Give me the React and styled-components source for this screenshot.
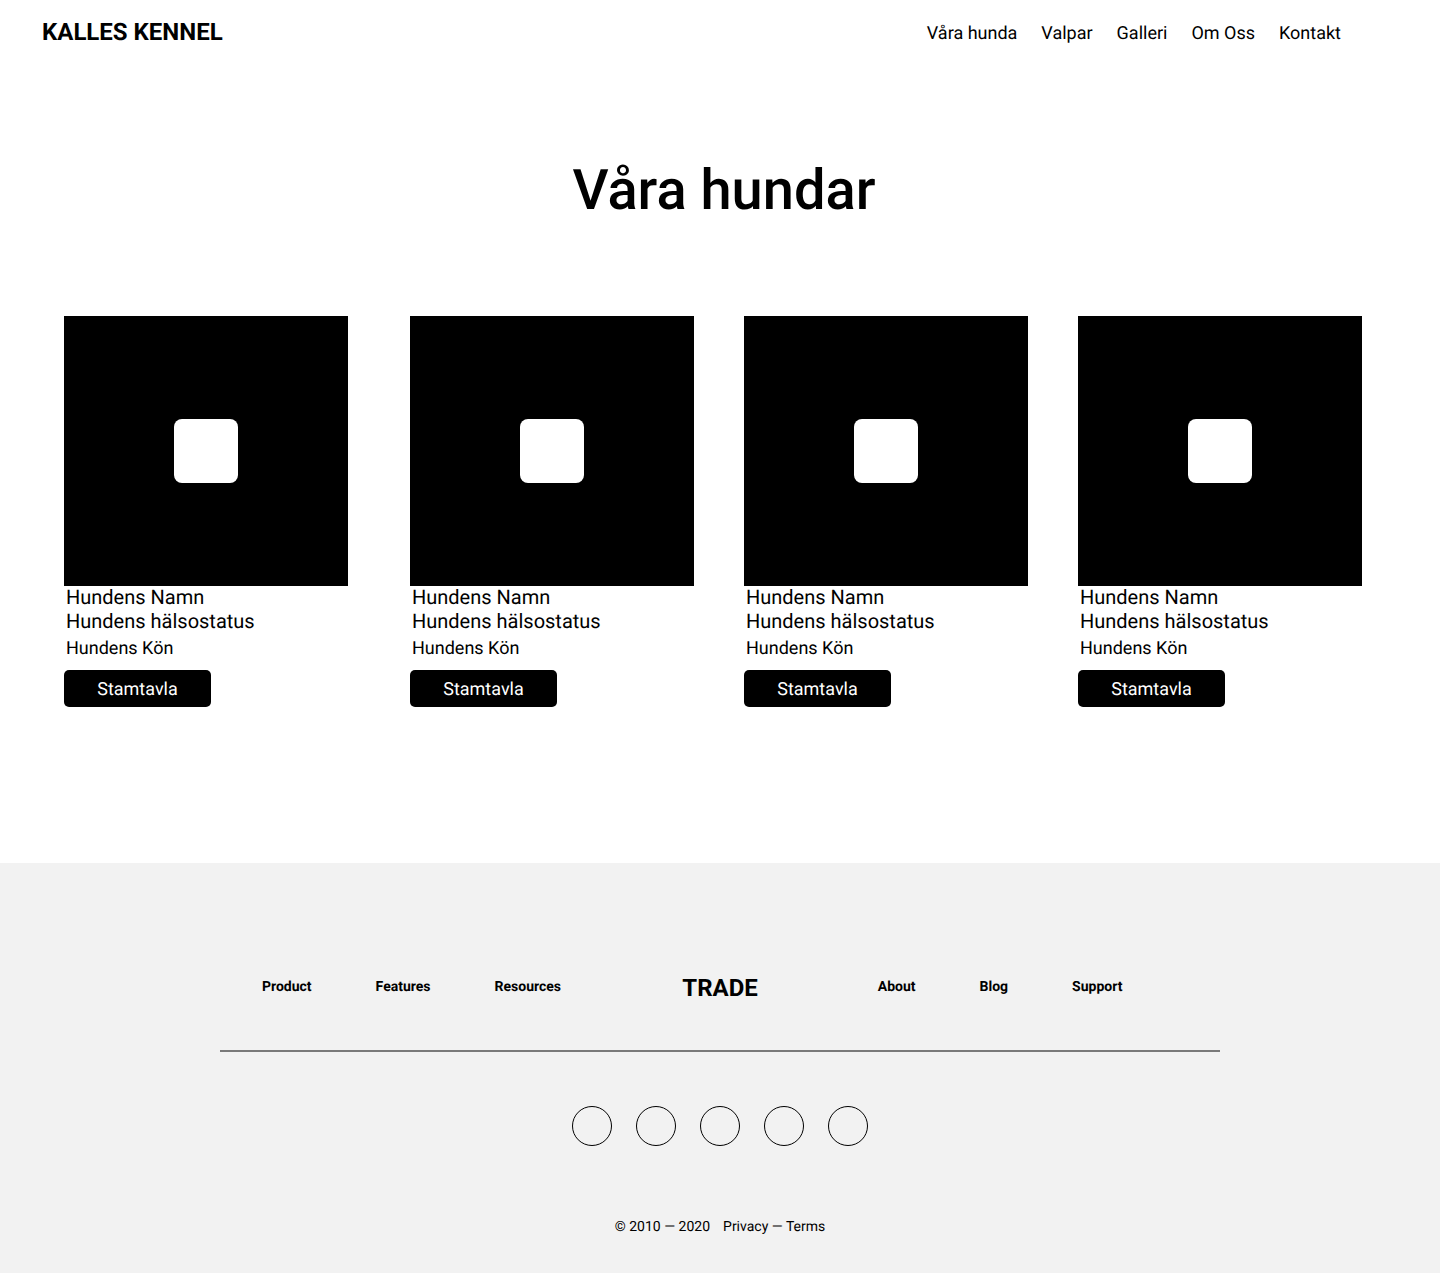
import React from "react";
import styled, { createGlobalStyle } from "styled-components";

const GlobalStyle = createGlobalStyle`
  *, *::before, *::after { box-sizing: border-box; }
  body {
    margin: 0;
    background: #fff;
    color: #000;
    font-family: Roboto, "Liberation Sans", sans-serif;
    text-rendering: geometricPrecision;
  }
  h1, h2, p, ul { margin: 0; padding: 0; }
  ul { list-style: none; }
  a { color: inherit; text-decoration: none; }
`;

const Header = styled.header`
  display: flex;
  justify-content: space-between;
  align-items: center;
  height: 64px;
  padding: 0 99px 0 42px;
`;

const Brand = styled.a`
  font-size: 24px;
  line-height: 32px;
  font-weight: 700;
`;

const Nav = styled.nav`
  display: flex;
  gap: 24px;
  padding-top: 4px;
  font-size: 18px;
  line-height: 24px;
`;

const Main = styled.main`
  padding: 92px 0 156px;
`;

const Title = styled.h1`
  padding-left: 8px;
  font-size: 56px;
  line-height: 68px;
  font-weight: 500;
  text-align: center;
`;

const DogList = styled.ul`
  display: grid;
  grid-template-columns: 296fr 284fr 284fr 284fr;
  column-gap: 50px;
  padding: 92px 78px 0 64px;
`;

const DogCard = styled.li`
  max-width: 284px;
`;

const Photo = styled.div`
  display: flex;
  justify-content: center;
  align-items: center;
  height: 270px;
  background: #000;
`;

const PhotoMark = styled.span`
  width: 64px;
  height: 64px;
  border-radius: 8px;
  background: #fff;
`;

const DogInfo = styled.div`
  display: flex;
  flex-direction: column;
  gap: 2px;
  padding: 0 2px;
  font-size: 20px;
  line-height: 22px;
`;

const DogName = styled.h2`
  font-size: 20px;
  font-weight: 400;
`;

const DogSex = styled.p`
  padding-top: 4px;
  font-size: 18px;
`;

const PedigreeButton = styled.button`
  display: block;
  width: 147px;
  height: 37px;
  margin-top: 10px;
  padding: 2px 0 0;
  border: 0;
  border-radius: 5px;
  background: #000;
  color: #fff;
  font-family: inherit;
  font-size: 18px;
  line-height: 24px;
  text-rendering: inherit;
`;

const Footer = styled.footer`
  padding: 109px 24px 36px;
  background: #f2f2f2;
`;

const FooterInner = styled.div`
  max-width: 1000px;
  margin: 0 auto;
`;

const FooterNav = styled.nav`
  display: grid;
  grid-template-columns: 1fr auto 1fr;
  align-items: start;
  padding: 0 42px 46px;
  border-bottom: 2px solid #7a7a7a;
`;

const FooterLinks = styled.div`
  display: flex;
  gap: 64px;
  padding-left: ${({ $inset }) => $inset || 0}px;
  font-size: 14px;
  line-height: 30px;
  font-weight: 700;
`;

const Socials = styled.ul`
  display: flex;
  justify-content: center;
  gap: 24px;
  padding: 54px 0 71px;
`;

const SocialLink = styled.a`
  display: block;
  width: 40px;
  height: 40px;
  border: 1px solid #000;
  border-radius: 50%;
`;

const Legal = styled.p`
  display: flex;
  justify-content: center;
  gap: 13px;
  font-size: 14px;
  line-height: 20px;
`;

const navItems = ["Våra hunda", "Valpar", "Galleri", "Om Oss", "Kontakt"];
const dogs = [1, 2, 3, 4];
const socialCount = 5;

function Dog() {
  return (
    <DogCard>
      <Photo>
        <PhotoMark />
      </Photo>
      <DogInfo>
        <DogName>Hundens Namn</DogName>
        <p>Hundens hälsostatus</p>
        <DogSex>Hundens Kön</DogSex>
      </DogInfo>
      <PedigreeButton type="button">Stamtavla</PedigreeButton>
    </DogCard>
  );
}

function LinkGroup({ items, inset }) {
  return (
    <FooterLinks $inset={inset}>
      {items.map((item) => (
        <a href="#" key={item}>{item}</a>
      ))}
    </FooterLinks>
  );
}

export default function App() {
  return (
    <>
      <GlobalStyle />
      <Header>
        <Brand href="#">KALLES KENNEL</Brand>
        <Nav>
          {navItems.map((item) => (
            <a href="#" key={item}>{item}</a>
          ))}
        </Nav>
      </Header>
      <Main>
        <Title>Våra hundar</Title>
        <DogList>
          {dogs.map((id) => (
            <Dog key={id} />
          ))}
        </DogList>
      </Main>
      <Footer>
        <FooterInner>
          <FooterNav>
            <LinkGroup items={["Product", "Features", "Resources"]} />
            <Brand href="#">TRADE</Brand>
            <LinkGroup items={["About", "Blog", "Support"]} inset={120} />
          </FooterNav>
          <Socials>
            {Array.from({ length: socialCount }, (_, i) => (
              <li key={i}>
                <SocialLink href="#" />
              </li>
            ))}
          </Socials>
          <Legal>
            <span>© 2010 — 2020</span>
            <span>Privacy — Terms</span>
          </Legal>
        </FooterInner>
      </Footer>
    </>
  );
}
